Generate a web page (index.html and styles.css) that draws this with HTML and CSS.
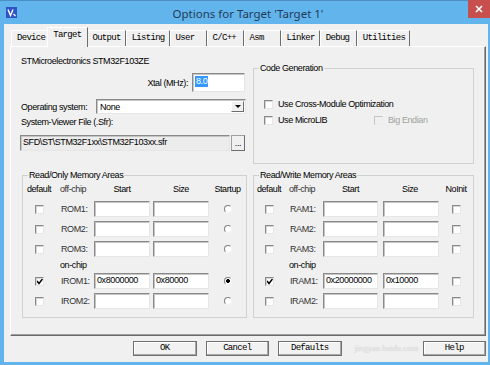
FILE: index.html
```html
<!DOCTYPE html>
<html lang="en">
  <head>
    <meta charset="UTF-8" />
    <title>Options for Target 'Target 1'</title>
    <link rel="stylesheet" href="styles.css">
  </head>
  <body>
    <div class="window">
      <div class="titlebar">
        <svg class="app-icon" width="11" height="11" viewBox="0 0 11 11">
          <rect width="11" height="11" fill="#2f55c4" />
          <path d="M2 2.5 L4.5 8.5 L7 2.5" fill="none" stroke="#fff" stroke-width="1.4" />
          <path d="M7.5 7 L9.5 9" stroke="#fff" stroke-width="1.2" />
        </svg>
        <div class="title">Options for Target 'Target 1'</div>
        <div class="close">
          <svg width="8" height="8" viewBox="0 0 8 8">
            <path d="M1 1 L7 7 M7 1 L1 7" stroke="#fff" stroke-width="1.6" />
          </svg>
        </div>
      </div>

      <div class="client">
        <div class="tabs">
          <div class="tab first">Device</div>
          <div class="tab selected">Target</div>
          <div class="tab">Output</div>
          <div class="tab">Listing</div>
          <div class="tab">User</div>
          <div class="tab">C/C++</div>
          <div class="tab">Asm</div>
          <div class="tab">Linker</div>
          <div class="tab">Debug</div>
          <div class="tab">Utilities</div>
        </div>

        <div class="panel">
          <div class="target-info">
            <div class="device">STMicroelectronics STM32F103ZE</div>
            <div class="xtal-row">
              <span>Xtal (MHz):</span>
              <div class="edit xtal"><span class="selected-text">8.0</span></div>
            </div>
            <div class="os-row">
              <span>Operating system:</span>
              <div class="edit combo">
                <span>None</span>
                <div class="drop"></div>
              </div>
            </div>
            <div class="sfr-label">System-Viewer File (.Sfr):</div>
            <div class="sfr-row">
              <div class="edit readonly">SFD\ST\STM32F1xx\STM32F103xx.sfr</div>
              <div class="browse">...</div>
            </div>
          </div>

          <fieldset class="group codegen">
            <legend>Code Generation</legend>
            <div class="options">
              <div class="option wide"><span class="cb"></span>Use Cross-Module Optimization</div>
              <div class="option"><span class="cb"></span>Use MicroLIB</div>
              <div class="option disabled"><span class="cb"></span>Big Endian</div>
            </div>
          </fieldset>

          <fieldset class="group rom">
            <legend>Read/Only Memory Areas</legend>
            <div class="mem rom-grid">
              <div class="head">default</div>
              <div class="head label">off-chip</div>
              <div class="head mid">Start</div>
              <div class="head mid size-head">Size</div>
              <div class="head mid">Startup</div>

              <span class="cb"></span>
              <div class="label">ROM1:</div>
              <div class="edit cell"></div>
              <div class="edit cell size"></div>
              <span class="radio"></span>

              <span class="cb"></span>
              <div class="label">ROM2:</div>
              <div class="edit cell"></div>
              <div class="edit cell size"></div>
              <span class="radio"></span>

              <span class="cb"></span>
              <div class="label">ROM3:</div>
              <div class="edit cell"></div>
              <div class="edit cell size"></div>
              <span class="radio"></span>

              <div></div>
              <div class="label onchip">on-chip</div>
              <div></div><div></div><div></div>

              <span class="cb checked"></span>
              <div class="label">IROM1:</div>
              <div class="edit cell">0x8000000</div>
              <div class="edit cell size">0x80000</div>
              <span class="radio on"></span>

              <span class="cb"></span>
              <div class="label">IROM2:</div>
              <div class="edit cell"></div>
              <div class="edit cell size"></div>
              <span class="radio"></span>
            </div>
          </fieldset>

          <fieldset class="group ram">
            <legend>Read/Write Memory Areas</legend>
            <div class="mem ram-grid">
              <div class="head">default</div>
              <div class="head label">off-chip</div>
              <div class="head mid">Start</div>
              <div class="head mid size-head">Size</div>
              <div class="head mid">NoInit</div>

              <span class="cb"></span>
              <div class="label">RAM1:</div>
              <div class="edit cell"></div>
              <div class="edit cell size"></div>
              <span class="cb"></span>

              <span class="cb"></span>
              <div class="label">RAM2:</div>
              <div class="edit cell"></div>
              <div class="edit cell size"></div>
              <span class="cb"></span>

              <span class="cb"></span>
              <div class="label">RAM3:</div>
              <div class="edit cell"></div>
              <div class="edit cell size"></div>
              <span class="cb"></span>

              <div></div>
              <div class="label onchip">on-chip</div>
              <div></div><div></div><div></div>

              <span class="cb checked"></span>
              <div class="label">IRAM1:</div>
              <div class="edit cell">0x20000000</div>
              <div class="edit cell size">0x10000</div>
              <span class="cb"></span>

              <span class="cb"></span>
              <div class="label">IRAM2:</div>
              <div class="edit cell"></div>
              <div class="edit cell size"></div>
              <span class="cb"></span>
            </div>
          </fieldset>
        </div>

        <div class="buttons">
          <div class="button">OK</div>
          <div class="button">Cancel</div>
          <div class="button">Defaults</div>
          <span class="watermark">jingyan.baidu.com</span>
          <div class="button help">Help</div>
        </div>
      </div>
    </div>
  </body>
</html>
```

FILE: styles.css
```css
* {
  box-sizing: border-box;
}
body {
  margin: 0;
  width: 490px;
  height: 365px;
  overflow: hidden;
  background: #62b4ec;
  font-family: "Liberation Sans", Arial, sans-serif;
  font-size: 9px;
  letter-spacing: -0.4px;
  color: #000;
}
.window {
  height: 365px;
  display: flex;
  flex-direction: column;
  border-top: 1px solid #4b8fc4;
}

/* title bar */
.titlebar {
  height: 23px;
  display: grid;
  grid-template-columns: 1fr auto 1fr;
  align-items: center;
  padding-left: 6px;
}
.app-icon {
  display: block;
}
.title {
  font-family: "Noto Sans", sans-serif;
  font-size: 11.5px;
  letter-spacing: 0;
  color: #233b55;
  padding-top: 1px;
}
.close {
  justify-self: end;
  align-self: start;
  width: 22px;
  height: 18px;
  margin-top: -1px;
  background: #c7504f;
  display: flex;
  align-items: center;
  justify-content: center;
}

/* client area */
.client {
  flex: 1;
  margin: 0 2px 3px 4px;
  padding: 0 2px 0 6px;
  background: #f0f0f0;
  display: flex;
  flex-direction: column;
}
.tabs {
  height: 22px;
  display: flex;
  align-items: flex-end;
  padding-left: 1px;
  font-family: "Liberation Mono", monospace;
  font-size: 9px;
  letter-spacing: -0.7px;
}
.tab {
  height: 16px;
  min-width: 37px;
  padding: 0 4px 0 5px;
  line-height: 15px;
  border-top: 1px solid #fff;
  border-left: 1px solid #fff;
  border-right: 1px solid #6d6d6d;
}
.tab.first {
  border-right: none;
}
.tab.selected {
  position: relative;
  z-index: 1;
  height: 20px;
  margin: 0 -2px -1px -2px;
  padding: 0 6px 0 5px;
  line-height: 15px;
  background: #f0f0f0;
}

.panel {
  height: 290px;
  border-top: 1px solid #fff;
  border-left: 1px solid #fff;
  border-right: 1px solid #696969;
  border-bottom: 1px solid #696969;
  box-shadow: inset -1px -1px 0 #a0a0a0;
  padding: 9px 10px 0 9px;
  display: grid;
  grid-template-columns: 227px 221px;
  column-gap: 6px;
  row-gap: 6px;
  align-content: start;
}

/* left top: device settings */
.device {
  line-height: 11px;
  padding-left: 1px;
}
.xtal-row {
  display: flex;
  justify-content: flex-end;
  align-items: center;
  margin: 6px 2px 0 0;
}
.xtal-row span:first-child {
  margin-right: 4px;
}
.edit {
  background: #fff;
  border-top: 1px solid #8a8a8a;
  border-left: 1px solid #8a8a8a;
  border-right: 1px solid #e6e6e6;
  border-bottom: 1px solid #e6e6e6;
  box-shadow: inset 1px 1px 0 #c4c4c4;
}
.xtal {
  width: 53px;
  height: 19px;
  padding: 2px 0 0 2px;
}
.selected-text {
  display: inline-block;
  background: #3399ff;
  color: #fff;
  line-height: 11px;
  padding: 0 1px;
}
.os-row {
  display: flex;
  justify-content: space-between;
  align-items: center;
  margin: 7px 1px 0 1px;
}
.combo {
  width: 150px;
  height: 15px;
  display: flex;
  align-items: center;
  justify-content: space-between;
  padding: 0 1px 0 3px;
}
.drop {
  width: 13px;
  height: 11px;
  background: #f0f0f0;
  border-top: 1px solid #fff;
  border-left: 1px solid #fff;
  border-right: 1px solid #6d6d6d;
  border-bottom: 1px solid #6d6d6d;
  display: flex;
  align-items: center;
  justify-content: center;
}
.drop::after {
  content: "";
  border-left: 3px solid transparent;
  border-right: 3px solid transparent;
  border-top: 3px solid #000;
}
.sfr-label {
  margin: 3px 0 0 1px;
  line-height: 11px;
}
.sfr-row {
  display: flex;
  margin: 7px 2px 0 0;
  height: 16px;
}
.edit.readonly {
  width: 210px;
  background: #ececec;
  line-height: 13px;
  padding-left: 2px;
}
.browse {
  width: 14px;
  margin-left: 1px;
  background: #f0f0f0;
  border: 1px solid #a0a0a0;
  border-right-color: #6d6d6d;
  border-bottom-color: #6d6d6d;
  text-align: center;
  line-height: 14px;
}

/* group boxes */
.group {
  margin: 0;
  padding: 0;
  min-width: 0;
  border: 1px solid #d0d0d0;
}
.group legend {
  margin-left: 5px;
  padding: 0 1px;
  line-height: 11px;
}
.codegen {
  margin-top: 7px;
  height: 101px;
}
.options {
  display: grid;
  grid-template-columns: 110px auto;
  grid-auto-rows: 16px;
  padding: 22px 0 0 10px;
}
.option {
  display: flex;
  align-items: center;
}
.option.wide {
  grid-column: 1 / 3;
}
.option .cb {
  margin-right: 5px;
}
.option.disabled {
  color: #a0a0a0;
}
.option.disabled .cb {
  border-color: #c4c4c4 #ececec #ececec #c4c4c4;
  box-shadow: none;
  background: #f0f0f0;
}
.cb {
  display: inline-block;
  width: 9px;
  height: 9px;
  background: #fff;
  border-top: 1px solid #8a8a8a;
  border-left: 1px solid #8a8a8a;
  border-right: 1px solid #e6e6e6;
  border-bottom: 1px solid #e6e6e6;
  box-shadow: inset 1px 1px 0 #d4d4d4;
}
.cb.checked {
  background: #fff url("data:image/svg+xml;utf8,<svg xmlns='http://www.w3.org/2000/svg' width='7' height='7'><path d='M1 3 L3 5.5 L6.5 1' fill='none' stroke='black' stroke-width='1.5'/></svg>") no-repeat center;
}
.radio {
  width: 8px;
  height: 8px;
  border-radius: 50%;
  background: #fff;
  border: 1px solid;
  border-color: #808080 #f4f4f4 #f4f4f4 #808080;
  justify-self: center;
}
.radio.on {
  background: radial-gradient(circle, #000 1.6px, #fff 2.2px);
}

.rom {
  margin-left: 2px;
}
.mem {
  display: grid;
  grid-template-rows: 15px 20px 20px 20px 12px 20px 20px;
  align-items: center;
  padding: 3px 0 6px 0;
}
.rom-grid {
  grid-template-columns: 32px 39px 56px 59px 1fr;
}
.ram-grid {
  grid-template-columns: 30px 39px 55px 61px 1fr;
}
.mem .cb {
  justify-self: center;
}
.head {
  align-self: start;
  line-height: 11px;
  text-align: center;
}
.head.label {
  text-align: left;
  padding-left: 5px;
}
.size-head {
  padding-left: 3px;
}
.label {
  padding-left: 6px;
  color: #333;
}
.label.onchip {
  padding-left: 5px;
  color: #000;
  align-self: start;
  padding-top: 1px;
}
.edit.cell {
  height: 16px;
  line-height: 13px;
  padding-left: 2px;
}
.edit.size {
  width: 56px;
  justify-self: end;
}

/* buttons */
.buttons {
  display: flex;
  align-items: flex-start;
  gap: 9px;
  margin: 5px 0 0 123px;
  font-family: "Liberation Mono", monospace;
  font-size: 9px;
  letter-spacing: -0.7px;
}
.button {
  width: 71px;
  height: 15px;
  line-height: 13px;
  text-align: center;
  background: #f2f2f2;
  border: 1px solid #707070;
  box-shadow: inset -1px -1px 0 #a8a8a8, inset 1px 1px 0 #fff;
}
.watermark {
  width: 41px;
  margin: 2px 0 0 4px;
  white-space: nowrap;
  overflow: visible;
  font-family: "Liberation Serif", serif;
  font-size: 9px;
  letter-spacing: -0.2px;
  color: #e6e6e6;
  text-shadow: 0 0 1px #c8c8c8;
}
.button.help {
  margin-left: 18px;
}
```
